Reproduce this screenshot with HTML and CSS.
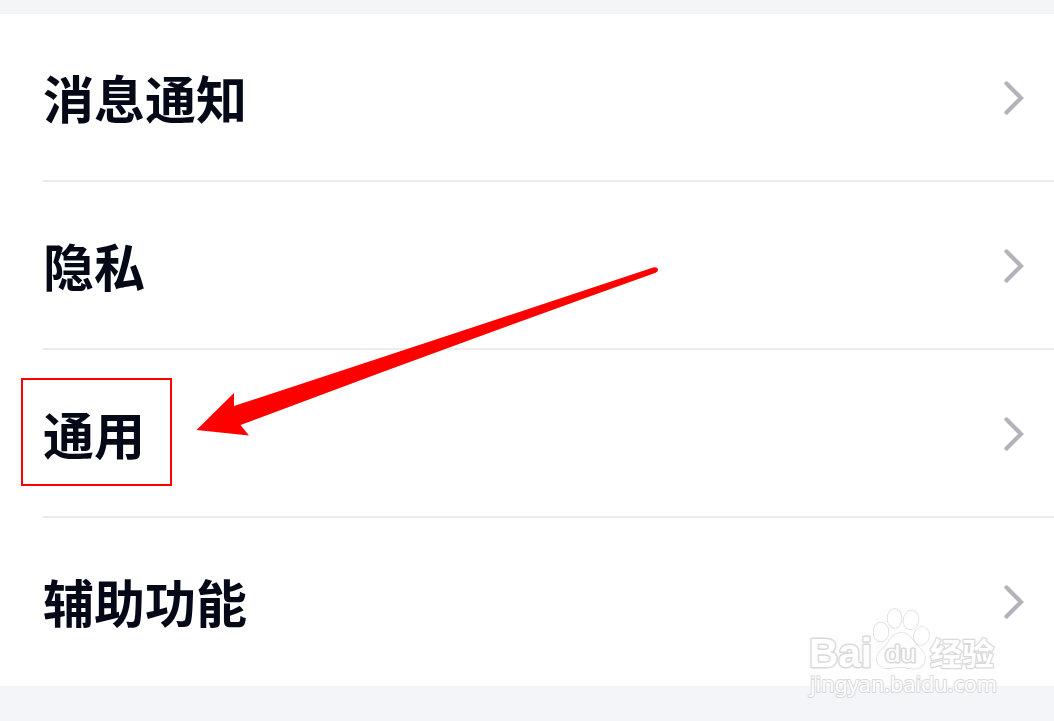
FILE: index.html
```html
<!DOCTYPE html>
<html lang="zh-CN">

<head>
    <meta charset="UTF-8">
    <meta name="viewport" content="width=device-width, initial-scale=1.0">
    <title>设置</title>
    <link rel="stylesheet" href="styles.css">
</head>

<body>
    <ul class="settings-list">
        <li class="settings-item">
            <span class="label">消息通知</span>
            <svg class="chevron" viewBox="0 0 22 36"><path d="M4.500 3.500 L19 18 L4.500 32.500"/></svg>
        </li>
        <li class="settings-item">
            <span class="label">隐私</span>
            <svg class="chevron" viewBox="0 0 22 36"><path d="M4.500 3.500 L19 18 L4.500 32.500"/></svg>
        </li>
        <li class="settings-item">
            <span class="label">通用</span>
            <svg class="chevron" viewBox="0 0 22 36"><path d="M4.500 3.500 L19 18 L4.500 32.500"/></svg>
        </li>
        <li class="settings-item">
            <span class="label">辅助功能</span>
            <svg class="chevron" viewBox="0 0 22 36"><path d="M4.500 3.500 L19 18 L4.500 32.500"/></svg>
        </li>
    </ul>

    <!-- Highlight box and arrow -->
    <div class="highlight"></div>
    <svg class="arrow" viewBox="0 0 470 180">
        <path d="M6.500 170 L44 133 V146 Q254 77 464 7.200 Q468 7 468 10 Q468 12 465 13 Q258 87 50.500 165 L59 175.500 Z"/>
    </svg>

    <!-- Watermark -->
    <svg class="watermark" viewBox="0 0 200 100">
        <text class="wm-brand" x="19" y="67" textLength="63" lengthAdjust="spacingAndGlyphs">Bai</text>
        <g class="wm-paw">
            <ellipse cx="91" cy="32" rx="7.500" ry="9.500"/>
            <ellipse cx="104.500" cy="18.500" rx="7" ry="9.500"/>
            <ellipse cx="121" cy="20" rx="7.500" ry="9.500" transform="rotate(10 121 20)"/>
            <ellipse cx="131.500" cy="36" rx="7.500" ry="9" transform="rotate(15 131.500 36)"/>
            <path d="M111 33 C103 33 101 39 97 44 C92 50 87 52 87 59 C87 66 93 69 100 68 C107 67 114 67 121 68.500 C129 70 135 66 135 58 C135 51 129 48 125 43 C121 38 119 33 111 33 Z"/>
        </g>
        <text class="wm-du" x="95" y="62" textLength="31" lengthAdjust="spacingAndGlyphs">du</text>
        <text class="wm-cn" x="140" y="65" textLength="64" lengthAdjust="spacingAndGlyphs">经验</text>
        <text class="wm-url" x="20" y="92" textLength="187" lengthAdjust="spacingAndGlyphs">jingyan.baidu.com</text>
    </svg>
</body>

</html>
```
FILE: styles.css
```css
body {
    margin: 0;
    height: 721px;
    padding-top: 14px;
    box-sizing: border-box;
    background-color: #f3f5f9;
    font-family: "Noto Sans CJK SC", sans-serif;
    position: relative;
    overflow: hidden;
}

.settings-list {
    list-style: none;
    margin: 0;
    padding: 0 0 0 42px;
    background-color: #fff;
}

.settings-item {
    display: flex;
    align-items: center;
    justify-content: space-between;
    height: 168px;
    padding-right: 30px;
    box-sizing: border-box;
    border-bottom: 2px solid #ededed;
}

.settings-item:last-child {
    border-bottom-color: transparent;
}

.label {
    font-size: 51px;
    line-height: 76px;
    font-weight: bold;
    color: #050817;
    padding-left: 1px;
}

.chevron {
    width: 22px;
    height: 36px;
    margin-top: 2px;
    fill: none;
    stroke: #b2b2ba;
    stroke-width: 4.2;
    stroke-linecap: round;
}

.highlight {
    position: absolute;
    left: 21px;
    top: 378px;
    width: 151px;
    height: 108px;
    box-sizing: border-box;
    border: 2px solid #f00;
}

.arrow {
    position: absolute;
    left: 190px;
    top: 260px;
    width: 470px;
    height: 180px;
    fill: #f00;
}

.watermark {
    position: absolute;
    left: 790px;
    top: 600px;
    width: 200px;
    height: 100px;
    overflow: visible;
    fill: #fff;
    stroke: #d9d9dc;
    stroke-width: 1.4;
    stroke-linejoin: round;
    paint-order: stroke;
}

.wm-brand {
    font-family: "Liberation Sans", Arial, sans-serif;
    font-size: 41px;
    font-weight: bold;
    stroke-width: 3;
}

.wm-du {
    font-family: "Liberation Sans", Arial, sans-serif;
    font-size: 24px;
    stroke-width: 3;
}

.wm-cn {
    font-size: 31px;
    font-weight: bold;
    stroke-width: 2.5;
}

.wm-url {
    font-family: "Noto Sans", sans-serif;
    font-size: 21px;
    stroke-width: 2;
}
```
